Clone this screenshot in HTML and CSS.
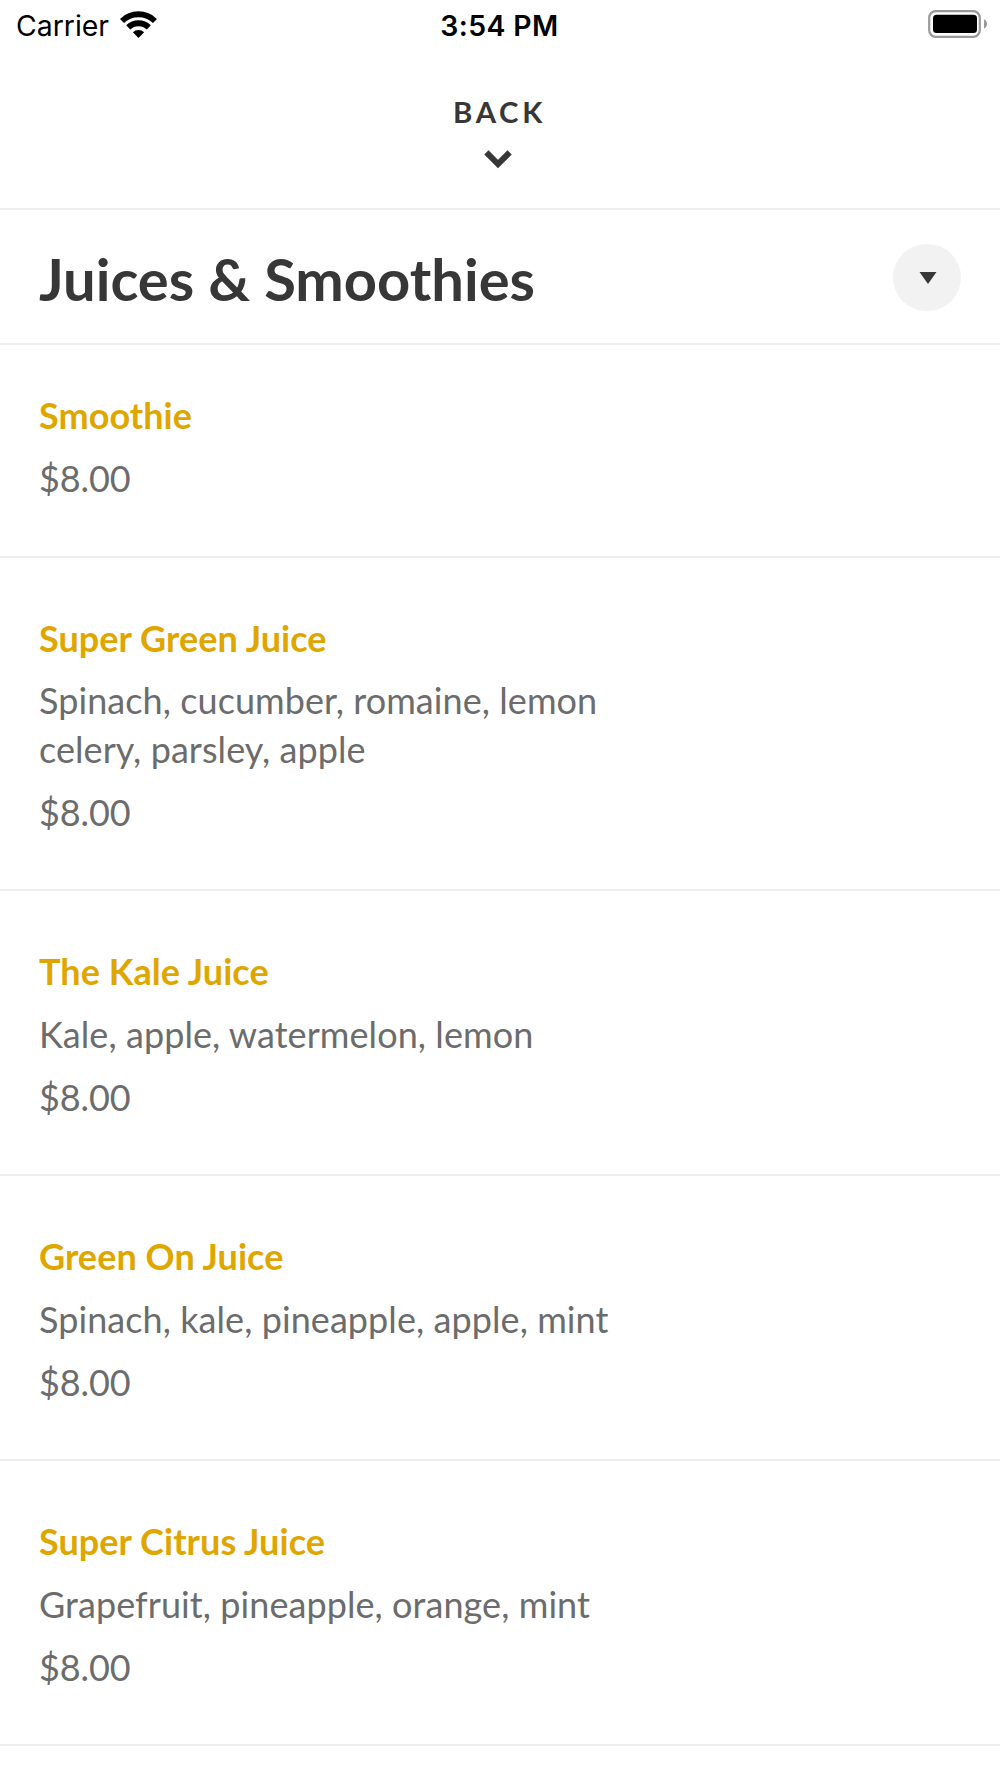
FILE: index.html
```html
<!DOCTYPE html>
<html lang="en">
<head>
<meta charset="utf-8">
<title>Juices &amp; Smoothies</title>
<link rel="stylesheet" href="styles.css">
</head>
<body>
<header class="status">
  <div class="carrier"><span>Carrier</span>
    <svg class="wifi" width="37" height="27" viewBox="0 0 37 27"><g fill="none" stroke="#000" stroke-width="5.8"><path d="M2 10a23.6 23.6 0 0 1 33 0"/><path d="M8.2 16.4a14.8 14.8 0 0 1 20.6 0"/></g><path d="M18.5 27l-5.6-5.7a8 8 0 0 1 11.2 0z"/></svg>
  </div>
  <div class="time">3:54 PM</div>
  <svg class="battery" width="59" height="28" viewBox="0 0 59 28"><rect x="1.2" y="1.2" width="50.6" height="25.6" rx="6.5" fill="none" stroke="#999" stroke-width="2.2"/><rect x="5" y="4.8" width="44" height="18.2" rx="3.5"/><path d="M56 9.3q3 1.5 3 4.7t-3 4.7z" fill="#999"/></svg>
</header>
<nav class="back"><span class="back-label">BACK</span>
  <svg class="chevron" width="30" height="20" viewBox="0 0 30 20"><path d="M3.4 2.4L15 14 26.6 2.4" fill="none" stroke="#373737" stroke-width="6"/></svg>
</nav>
<section class="heading"><h1>Juices &amp; Smoothies</h1>
  <button class="toggle" aria-label="Choose section"><svg width="18" height="12" viewBox="0 0 18 12"><path d="M.5 0h17L9 12z" fill="#373737"/></svg></button>
</section>
<main>
  <article class="item first"><h2>Smoothie</h2><p class="price">$8.00</p></article>
  <article class="item"><h2>Super Green Juice</h2><p class="desc">Spinach, cucumber, romaine, lemon<br>celery, parsley, apple</p><p class="price">$8.00</p></article>
  <article class="item"><h2>The Kale Juice</h2><p class="desc">Kale, apple, watermelon, lemon</p><p class="price">$8.00</p></article>
  <article class="item"><h2>Green On Juice</h2><p class="desc">Spinach, kale, pineapple, apple, mint</p><p class="price">$8.00</p></article>
  <article class="item"><h2>Super Citrus Juice</h2><p class="desc">Grapefruit, pineapple, orange, mint</p><p class="price">$8.00</p></article>
</main>
</body>
</html>
```
FILE: styles.css
```css
* { box-sizing: border-box; }
body { margin: 0; background: #fff; color: #373737; font-family: Lato, sans-serif; }
h1, h2, p { margin: 0; }
.status { height: 50px; padding: 2px 17px 0 16px; display: grid; grid-template-columns: 1fr auto 1fr; align-items: center; color: #000; font: 28.4px/48px Inter, sans-serif; }
.carrier { display: flex; align-items: center; gap: 11px; }
.wifi { margin-bottom: 3px; }
.time { font-weight: 560; letter-spacing: .4px; }
.battery { justify-self: end; margin: 0 -4px 4px 0; }
.back { height: 160px; padding-top: 44px; display: flex; flex-direction: column; align-items: center; border-bottom: 2px solid #eee; }
.back-label { margin-right: 1px; font-size: 29.3px; line-height: 36px; font-weight: 700; letter-spacing: 3.7px; }
.chevron { margin: 20px 4px 0 0; }
.heading { height: 135.3px; padding: 3px 39px 0; display: flex; align-items: center; justify-content: space-between; border-bottom: 2px solid #eee; }
h1 { padding-top: 2px; font-size: 57.9px; line-height: 70px; font-weight: 700; }
.toggle { width: 67.6px; height: 67.6px; margin: 0 0 1px; padding: 0 0 0 2px; border: 0; border-radius: 50%; background: #f2f2f2; display: grid; place-items: center; }
.item { padding: 56.1px 39px 53.1px; border-bottom: 2px solid #eee; font-size: 36px; line-height: 48.5px; color: #6c6c6c; }
.item.first { padding: 46.2px 39px 52.9px; }
h2 { font-size: 36px; line-height: 48.5px; font-weight: 700; letter-spacing: .05px; color: #dfa600; }
.desc, .price { margin-top: 14.2px; }
.desc { letter-spacing: .07px; }
.price { letter-spacing: -.1px; }
```
